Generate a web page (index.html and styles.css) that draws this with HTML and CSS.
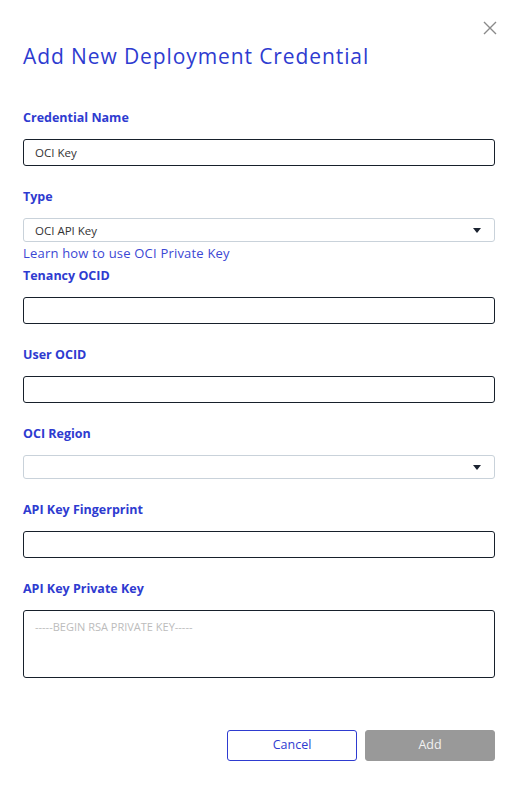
FILE: index.html
```html
<!DOCTYPE html>
<html lang="en">
<head>
    <meta charset="UTF-8">
    <meta name="viewport" content="width=device-width, initial-scale=1.0">
    <title>Add New Deployment Credential</title>
    <link rel="stylesheet" href="styles.css">
</head>
<body>
    <div class="modal">
        <div class="modal-top">
            <button type="button" class="close-btn" aria-label="Close">
                <svg width="14" height="14" viewBox="0 0 14 14"><path d="M1 1 L13 13 M13 1 L1 13" stroke="#8a8a8a" stroke-width="1.4" fill="none"/></svg>
            </button>
        </div>
        <h1 class="modal-title">Add New Deployment Credential</h1>
        <form class="cred-form">
            <div class="field">
                <label for="credName">Credential Name</label>
                <input type="text" id="credName" class="text-input" value="OCI Key">
            </div>
            <div class="field field-type">
                <label for="credType">Type</label>
                <div class="select-box" id="credType">
                    <span>OCI API Key</span>
                    <span class="caret"></span>
                </div>
                <a href="#" class="help-link">Learn how to use OCI Private Key</a>
            </div>
            <div class="field">
                <label for="tenancy">Tenancy OCID</label>
                <input type="text" id="tenancy" class="text-input">
            </div>
            <div class="field">
                <label for="user">User OCID</label>
                <input type="text" id="user" class="text-input">
            </div>
            <div class="field">
                <label for="region">OCI Region</label>
                <div class="select-box" id="region">
                    <span></span>
                    <span class="caret"></span>
                </div>
            </div>
            <div class="field">
                <label for="fingerprint">API Key Fingerprint</label>
                <input type="text" id="fingerprint" class="text-input">
            </div>
            <div class="field">
                <label for="privKey">API Key Private Key</label>
                <textarea id="privKey" class="key-input" placeholder="-----BEGIN RSA PRIVATE KEY-----"></textarea>
            </div>
            <div class="actions">
                <button type="button" class="btn btn-cancel">Cancel</button>
                <button type="submit" class="btn btn-add" disabled>Add</button>
            </div>
        </form>
    </div>
</body>
</html>
```

FILE: styles.css
```css
body {
    margin: 0;
    background: #fff;
    font-family: 'Open Sans', Lato, sans-serif;
}
.modal {
    padding: 21px 21px 0 23px;
}
.modal-top {
    display: flex;
    justify-content: flex-end;
}
.close-btn {
    background: none;
    border: none;
    padding: 0;
    margin-right: -2px;
    width: 14px;
    height: 14px;
    cursor: pointer;
    display: block;
}
.close-btn svg {
    display: block;
}
.modal-title {
    margin: 8px 0 0 0;
    font-size: 21px;
    line-height: 26px;
    font-weight: 400;
    letter-spacing: 0.9px;
    color: #2e3bd0;
}
.cred-form {
    margin-top: 40px;
    display: flex;
    flex-direction: column;
}
.field {
    display: flex;
    flex-direction: column;
    margin-bottom: 22px;
}
.field label {
    font-size: 12.5px;
    line-height: 16px;
    font-weight: 700;
    color: #2e3bd0;
    padding-top: 1px;
    margin-bottom: 13px;
}
.text-input {
    box-sizing: border-box;
    height: 27px;
    border: 1px solid #17202b;
    border-radius: 3px;
    padding: 0 11px;
    font-family: inherit;
    font-size: 11.5px;
    color: #333;
    outline: none;
}
.select-box {
    box-sizing: border-box;
    height: 24px;
    border: 1px solid #c9d2da;
    border-radius: 3px;
    padding: 0 13px 0 11px;
    display: flex;
    align-items: center;
    justify-content: space-between;
    font-size: 11.5px;
    color: #333;
}
.caret {
    width: 0;
    height: 0;
    border-left: 4px solid transparent;
    border-right: 4px solid transparent;
    border-top: 5px solid #1b2330;
}
.field-type {
    margin-bottom: 6px;
}
.help-link {
    margin-top: 3px;
    font-size: 13px;
    line-height: 16px;
    letter-spacing: 0.2px;
    color: #3b47d4;
    text-decoration: none;
}
.key-input {
    box-sizing: border-box;
    height: 68px;
    border: 1px solid #17202b;
    border-radius: 3px;
    padding: 8px 11px;
    font-family: inherit;
    font-size: 11px;
    color: #333;
    resize: none;
    outline: none;
}
.key-input::placeholder {
    color: #bcbcbc;
}
.actions {
    margin-top: 30px;
    display: flex;
    justify-content: flex-end;
    gap: 8px;
}
.btn {
    width: 130px;
    height: 31px;
    border-radius: 3px;
    font-family: inherit;
    font-size: 12.5px;
    line-height: 1;
    padding: 0;
    cursor: pointer;
}
.btn-cancel {
    background: #fff;
    border: 1px solid #2e3bd0;
    color: #2e3bd0;
}
.btn-add {
    background: #999;
    border: 1px solid #999;
    color: #f2f2f2;
}
```
